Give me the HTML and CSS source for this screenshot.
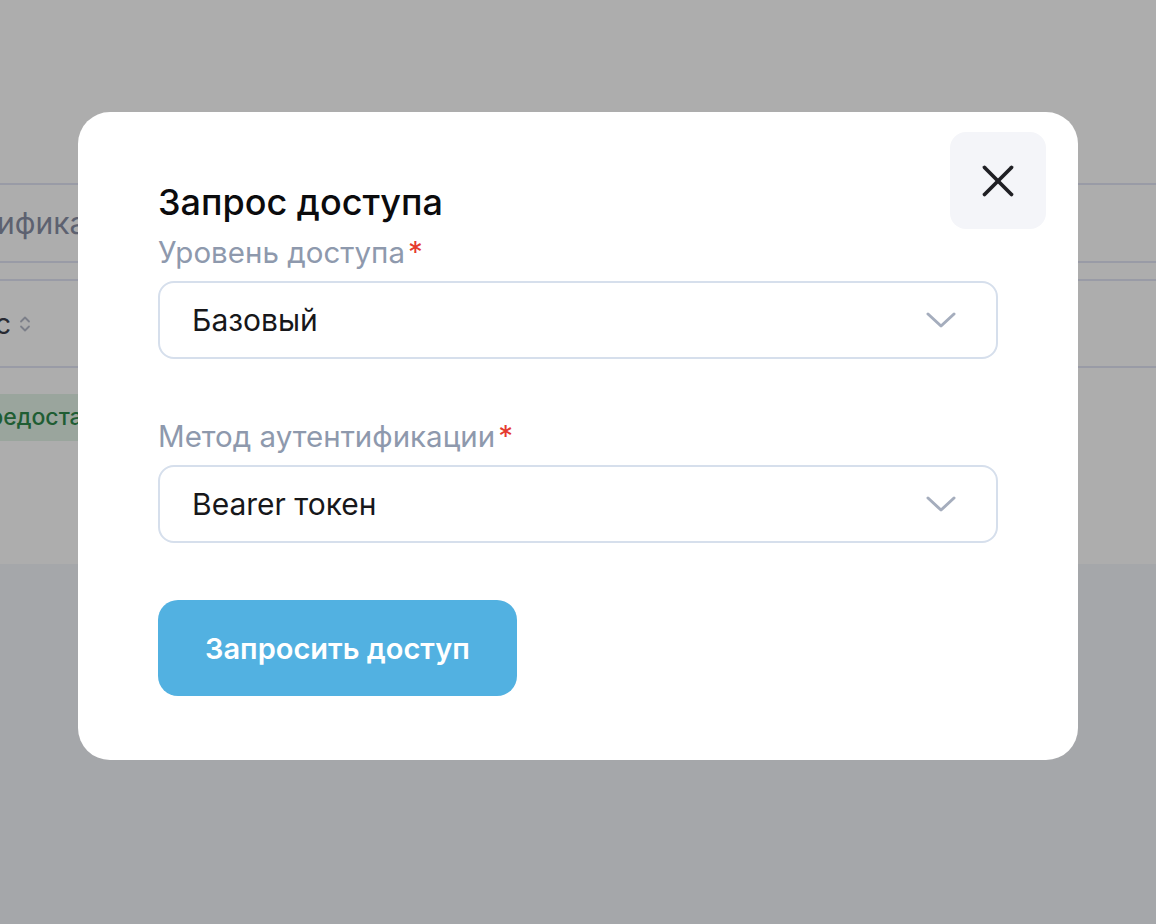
FILE: index.html
```html
<!DOCTYPE html>
<html lang="ru">
<head>
    <meta charset="UTF-8">
    <meta name="viewport" content="width=device-width, initial-scale=1.0">
    <title>Запрос доступа</title>
    <link rel="stylesheet" href="styles.css">
</head>
<body>

    <div class="page">
        <div class="panel">
            <div class="table">
                <div class="table-head">
                    <span class="head-title">ификация</span>
                </div>
                <div class="table-cols">
                    <span class="col-name">с</span>
                    <svg class="sort-icon" width="12" height="18" viewBox="0 0 12 18" fill="none" stroke="#b7bccb" stroke-width="1.8" stroke-linecap="round" stroke-linejoin="round">
                        <path d="M2 6.5 6 2.5 10 6.5"/>
                        <path d="M2 11.5 6 15.5 10 11.5"/>
                    </svg>
                </div>
                <div class="table-row">
                    <span class="badge">редоставлен</span>
                </div>
            </div>
        </div>
    </div>

    <div class="overlay">
        <div class="modal">
            <button class="close-btn" type="button" aria-label="Закрыть">
                <svg width="34" height="34" viewBox="0 0 34 34" fill="none" stroke="#1f1f24" stroke-width="3.8" stroke-linecap="round">
                    <path d="M3.5 3.5 30.5 30.5"/>
                    <path d="M30.5 3.5 3.5 30.5"/>
                </svg>
            </button>

            <h1>Запрос доступа</h1>

            <form class="form">
                <div class="field">
                    <label>Уровень доступа<span class="req">*</span></label>
                    <div class="select">
                        <span>Базовый</span>
                        <svg class="chevron" width="30" height="16" viewBox="0 0 30 16" fill="none" stroke="#a5adbd" stroke-width="3" stroke-linecap="round" stroke-linejoin="round">
                            <path d="M2 2 15 14 28 2"/>
                        </svg>
                    </div>
                </div>

                <div class="field">
                    <label>Метод аутентификации<span class="req">*</span></label>
                    <div class="select">
                        <span>Bearer токен</span>
                        <svg class="chevron" width="30" height="16" viewBox="0 0 30 16" fill="none" stroke="#a5adbd" stroke-width="3" stroke-linecap="round" stroke-linejoin="round">
                            <path d="M2 2 15 14 28 2"/>
                        </svg>
                    </div>
                </div>

                <button class="submit-btn" type="button">Запросить доступ</button>
            </form>
        </div>
    </div>

</body>
</html>
```

FILE: styles.css
```css
* {
    box-sizing: border-box;
}

body {
    margin: 0;
    font-family: Inter, "Noto Sans", sans-serif;
    background-color: #f4f6fb;
    height: 924px;
    overflow: hidden;
}

/* page behind the modal */
.page {
    height: 100%;
}

.panel {
    background-color: white;
    height: 564px;
    padding-top: 183px;
}

.table-head {
    height: 80px;
    border-top: 2px solid #e2e5f5;
    border-bottom: 2px solid #e2e5f5;
    display: flex;
    align-items: center;
}

.head-title {
    font-size: 30px;
    color: #8990a5;
    margin-left: -3px;
}

.table-cols {
    margin-top: 16px;
    height: 89px;
    border-top: 2px solid #e2e5f5;
    border-bottom: 2px solid #e2e5f5;
    display: flex;
    align-items: center;
    gap: 8px;
}

.col-name {
    font-size: 28px;
    color: #3b3f4c;
    margin-left: -5px;
}

.table-row {
    padding-top: 26px;
}

.badge {
    display: inline-block;
    background-color: #e4f3e8;
    color: #2f8a4c;
    font-size: 23px;
    font-weight: 500;
    line-height: 47px;
    padding: 0 12px 0 0;
    margin-left: -11px;
}

/* modal */
.overlay {
    position: fixed;
    inset: 0;
    background-color: rgba(0, 0, 0, 0.32);
    display: flex;
    justify-content: center;
    align-items: flex-start;
    padding-top: 112px;
}

.modal {
    position: relative;
    background-color: white;
    width: 1000px;
    border-radius: 32px;
    padding: 68px 80px 64px 80px;
}

.close-btn {
    position: absolute;
    top: 20px;
    right: 32px;
    width: 96px;
    height: 97px;
    border: none;
    border-radius: 16px;
    background-color: #f4f5f9;
    display: flex;
    align-items: center;
    justify-content: center;
    cursor: pointer;
    padding: 0;
}

h1 {
    margin: 0 0 10px 0;
    font-size: 36px;
    font-weight: 500;
    line-height: 44px;
    color: #0b0b0d;
}

.field {
    margin-bottom: 59px;
}

label {
    display: block;
    font-size: 29.5px;
    line-height: 36px;
    color: #8e99ad;
    margin-bottom: 11px;
}

.req {
    color: #e53a2f;
    margin-left: 3px;
}

.select {
    height: 78px;
    border: 2px solid #d6dfec;
    border-radius: 16px;
    display: flex;
    align-items: center;
    justify-content: space-between;
    padding: 0 40px 0 32px;
    font-size: 30px;
    color: #17171a;
}

.form .field:last-of-type {
    margin-bottom: 57px;
}

.submit-btn {
    height: 96px;
    border: none;
    border-radius: 20px;
    background-color: #52b1e1;
    color: white;
    font-family: Inter, "Noto Sans", sans-serif;
    font-size: 29px;
    font-weight: 600;
    padding: 0 47px;
    cursor: pointer;
}
```
